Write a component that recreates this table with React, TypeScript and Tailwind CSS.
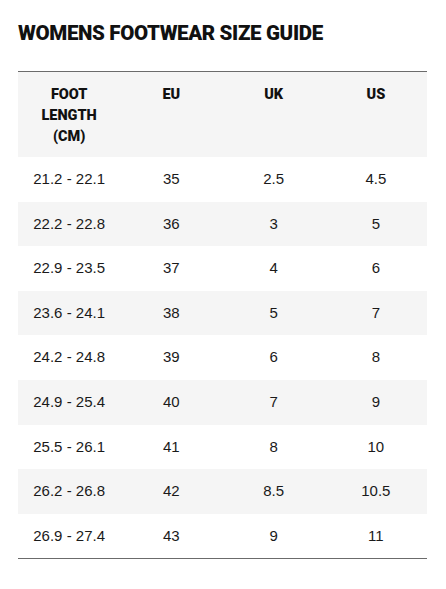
import React from "react";

const rows = [
  ["21.2 - 22.1", "35", "2.5", "4.5"],
  ["22.2 - 22.8", "36", "3", "5"],
  ["22.9 - 23.5", "37", "4", "6"],
  ["23.6 - 24.1", "38", "5", "7"],
  ["24.2 - 24.8", "39", "6", "8"],
  ["24.9 - 25.4", "40", "7", "9"],
  ["25.5 - 26.1", "41", "8", "10"],
  ["26.2 - 26.8", "42", "8.5", "10.5"],
  ["26.9 - 27.4", "43", "9", "11"],
];

export default function App() {
  return (
    <div className="w-[446px] h-[589px] bg-white px-[18px] pt-[22px]">
      <h1 className="font-['Roboto',sans-serif] text-[20.5px] leading-[22px] font-black text-[#111] tracking-[-0.35px]">
        WOMENS FOOTWEAR SIZE GUIDE
      </h1>
      <div className="mt-[27px] w-[409px] border-t border-b border-[#6b6b6b]">
        <div className="grid grid-cols-4 bg-[#f5f5f5] h-[85px] pt-[12px] font-['Roboto',sans-serif] text-[14.5px] leading-[21px] font-black text-[#111] text-center">
          <div>
            FOOT
            <br />
            LENGTH
            <br />
            (CM)
          </div>
          <div>EU</div>
          <div>UK</div>
          <div>US</div>
        </div>
        {rows.map((r, i) => (
          <div
            key={i}
            className={
              i % 2 === 1
                ? "grid grid-cols-4 items-center h-[44.6px] font-['Liberation_Sans',Arial,sans-serif] text-[15px] text-[#1a1a1a] text-center bg-[#f5f5f5]"
                : "grid grid-cols-4 items-center h-[44.6px] font-['Liberation_Sans',Arial,sans-serif] text-[15px] text-[#1a1a1a] text-center bg-white"
            }
          >
            {r.map((c, j) => (
              <div key={j}>{c}</div>
            ))}
          </div>
        ))}
      </div>
    </div>
  );
}
